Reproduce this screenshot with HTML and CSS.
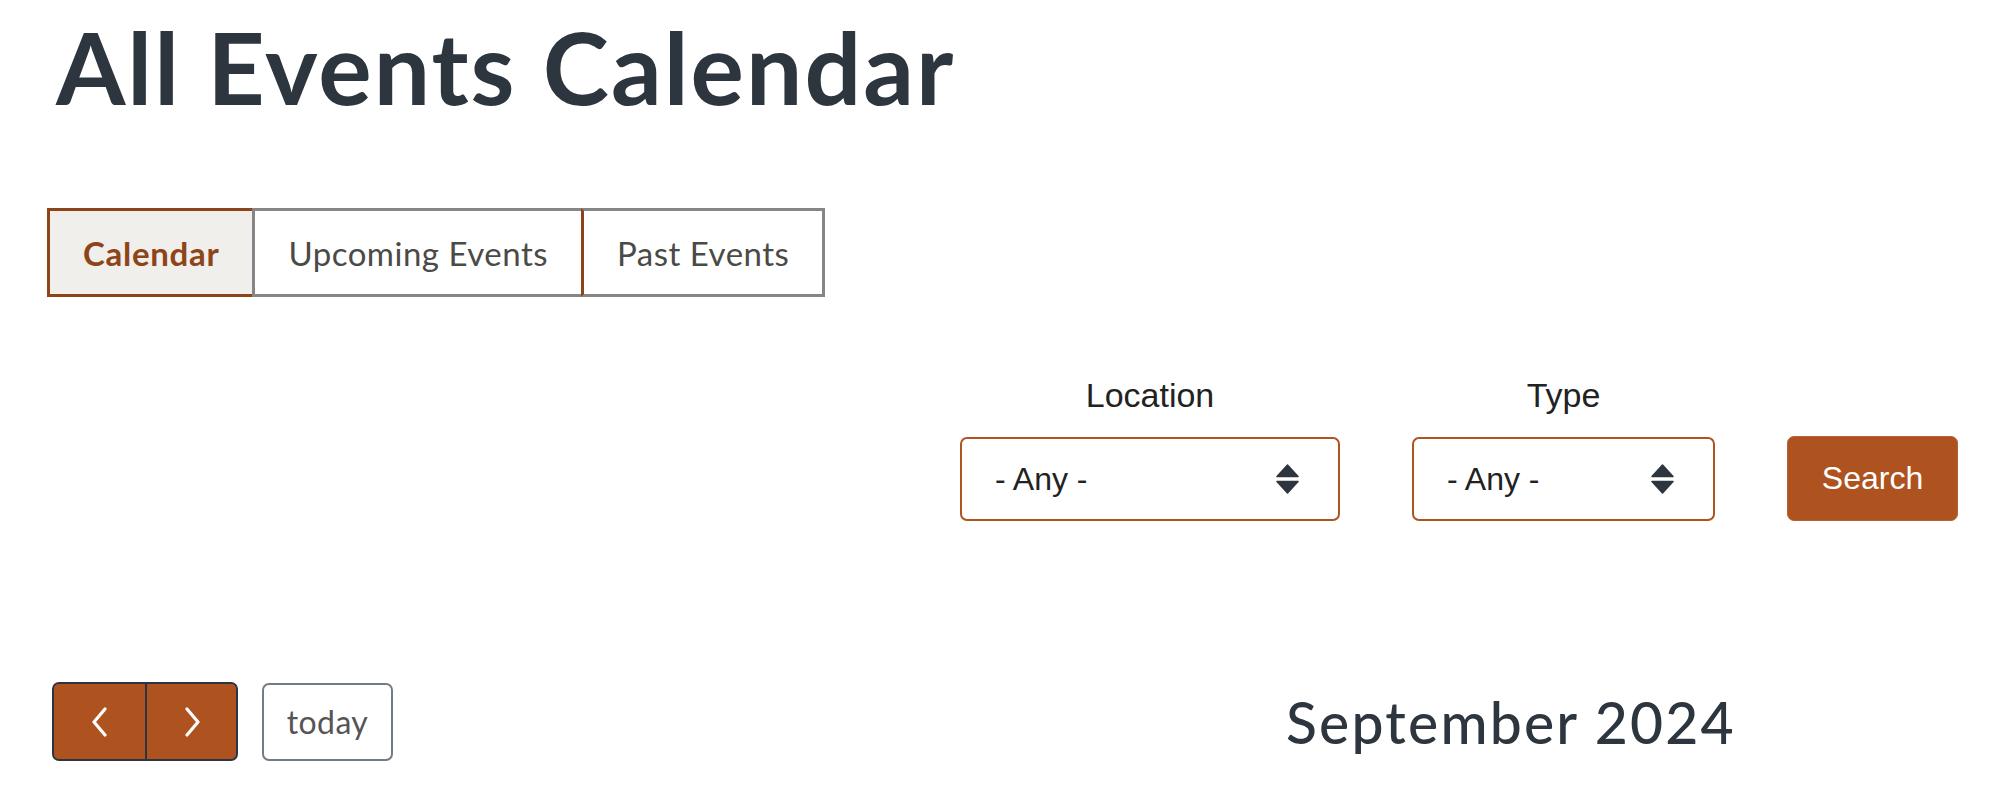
FILE: index.html
```html
<!DOCTYPE html>
<html lang="en">
<head>
<meta charset="utf-8">
<title>All Events Calendar</title>
<link rel="stylesheet" href="styles.css">
</head>
<body>
<main class="page">
  <h1 class="page-title">All Events Calendar</h1>

  <nav class="tabs">
    <a class="tab tab-active" href="#">Calendar</a>
    <a class="tab tab-upcoming" href="#">Upcoming Events</a>
    <a class="tab tab-past" href="#">Past Events</a>
  </nav>

  <form class="filters">
    <div class="field field-location">
      <label class="field-label" for="loc">Location</label>
      <div class="select-wrap">
        <select id="loc" class="select"><option>- Any -</option></select>
        <svg class="select-arrows" width="23" height="30" viewBox="0 0 23 30"><path d="M11.5 1 L22 12.5 L1 12.5 Z M1 17.5 L22 17.5 L11.5 29 Z" fill="#2d353e" stroke="#2d353e" stroke-width="1.5" stroke-linejoin="round"/></svg>
      </div>
    </div>
    <div class="field field-type">
      <label class="field-label" for="type">Type</label>
      <div class="select-wrap">
        <select id="type" class="select"><option>- Any -</option></select>
        <svg class="select-arrows" width="23" height="30" viewBox="0 0 23 30"><path d="M11.5 1 L22 12.5 L1 12.5 Z M1 17.5 L22 17.5 L11.5 29 Z" fill="#2d353e" stroke="#2d353e" stroke-width="1.5" stroke-linejoin="round"/></svg>
      </div>
    </div>
    <button type="button" class="search-btn">Search</button>
  </form>

  <div class="toolbar">
    <div class="toolbar-left">
      <div class="btn-group">
        <button type="button" class="nav-btn" aria-label="prev"><svg width="18" height="30" viewBox="0 0 18 30"><path d="M14 2 L3 15 L14 28" fill="none" stroke="#fff" stroke-width="3.2" stroke-linecap="round" stroke-linejoin="round"/></svg></button>
        <button type="button" class="nav-btn nav-next" aria-label="next"><svg width="18" height="30" viewBox="0 0 18 30"><path d="M4 2 L15 15 L4 28" fill="none" stroke="#fff" stroke-width="3.2" stroke-linecap="round" stroke-linejoin="round"/></svg></button>
      </div>
      <button type="button" class="today-btn">today</button>
    </div>
    <h2 class="month-title">September 2024</h2>
  </div>
</main>
</body>
</html>
```

FILE: styles.css
```css
html, body {
  margin: 0;
  padding: 0;
  background: #ffffff;
}

.page {
  padding: 6px 50px 0 47px;
  font-family: "Lato", "Liberation Sans", sans-serif;
  color: #2d353e;
}

.page-title {
  margin: 0 0 0 9px;
  font-family: "Lato", sans-serif;
  font-weight: 700;
  font-size: 100px;
  line-height: 120px;
  letter-spacing: 2px;
  color: #2d353e;
}

.tabs {
  display: flex;
  margin-top: 82px;
}

.tab {
  box-sizing: border-box;
  height: 89px;
  display: flex;
  align-items: center;
  padding: 0 33px;
  font-family: "Lato", sans-serif;
  font-size: 33px;
  letter-spacing: 0.5px;
  color: #4a4a46;
  text-decoration: none;
  background: #ffffff;
  border: 3px solid #868686;
}

.tab-active {
  background: #f0efeb;
  color: #8e4419;
  font-weight: 700;
  letter-spacing: 0.7px;
  border-color: #8e4419;
  border-right: none;
}

.tab-upcoming {
  border-right: none;
}

.tab-past {
  border-left-color: #8e4419;
}

.filters {
  display: flex;
  justify-content: flex-end;
  align-items: flex-end;
  gap: 72px;
  margin-top: 79px;
}

.field {
  display: flex;
  flex-direction: column;
  align-items: center;
}

.field-label {
  font-family: "Liberation Sans", Arial, sans-serif;
  font-size: 34px;
  line-height: 39px;
  color: #222222;
  margin-bottom: 22px;
}

.select-wrap {
  position: relative;
}

.field-location .select-wrap { width: 380px; }
.field-type .select-wrap { width: 303px; }

.select {
  -webkit-appearance: none;
  appearance: none;
  box-sizing: border-box;
  display: block;
  width: 100%;
  height: 84px;
  padding: 0 70px 0 33px;
  border: 2px solid #b0541f;
  border-radius: 7px;
  background: #ffffff;
  font-family: "Liberation Sans", Arial, sans-serif;
  font-size: 32px;
  color: #222222;
}

.select-arrows {
  position: absolute;
  right: 41px;
  top: 27px;
  pointer-events: none;
}

.search-btn {
  box-sizing: border-box;
  width: 171px;
  height: 85px;
  border: 1px solid #b5623a;
  border-radius: 7px;
  background: #ae5320;
  color: #ffffff;
  font-family: "Liberation Sans", Arial, sans-serif;
  font-size: 32px;
  padding: 0;
}

.toolbar {
  display: flex;
  align-items: center;
  margin-top: 161px;
  padding-left: 5px;
}

.toolbar-left {
  display: flex;
  align-items: center;
  gap: 24px;
}

.btn-group {
  display: flex;
  box-sizing: border-box;
  height: 79px;
  border: 2px solid #2c3440;
  border-radius: 7px;
  overflow: hidden;
  background: #ae5320;
}

.nav-btn {
  width: 91px;
  height: 100%;
  border: none;
  background: #ae5320;
  display: flex;
  align-items: center;
  justify-content: center;
  padding: 0;
}

.nav-next {
  border-left: 2px solid #2c3440;
}

.today-btn {
  box-sizing: border-box;
  width: 131px;
  height: 78px;
  border: 2px solid #737b84;
  border-radius: 7px;
  background: #ffffff;
  font-family: "Lato", sans-serif;
  font-size: 32px;
  letter-spacing: 0.4px;
  color: #555555;
  padding: 0;
}

.month-title {
  margin: 0 0 0 893px;
  font-family: "Lato", sans-serif;
  font-weight: 500;
  font-size: 57px;
  line-height: 68px;
  letter-spacing: 2.2px;
  color: #2d353e;
}
```
